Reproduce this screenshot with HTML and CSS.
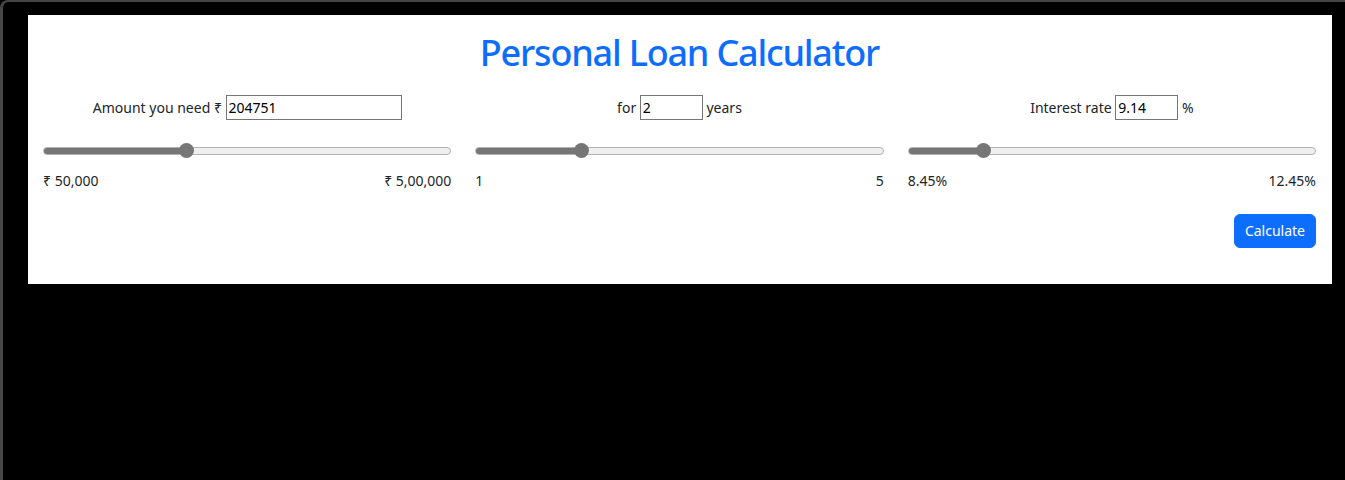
FILE: index.html
```html
<!DOCTYPE html>
<html lang="en">
<head>
<meta charset="utf-8">
<title>Personal Loan Calculator</title>
<link rel="stylesheet" href="styles.css">
</head>
<body>
<div class="window">
  <main class="card">
    <h1 class="title">Personal Loan Calculator</h1>
    <div class="grid">
      <section class="field">
        <div class="field-head"><label for="amount">Amount you need ₹</label> <input id="amount" class="num num-wide" type="text" value="204751"></div>
        <input class="slider" type="range" min="50000" max="500000" value="204751" style="--f:0.3439">
        <div class="range-labels"><span>₹ 50,000</span><span>₹ 5,00,000</span></div>
      </section>
      <section class="field">
        <div class="field-head"><label for="years">for</label> <input id="years" class="num" type="text" value="2"> <span>years</span></div>
        <input class="slider" type="range" min="1" max="5" value="2" style="--f:0.25">
        <div class="range-labels"><span>1</span><span>5</span></div>
      </section>
      <section class="field">
        <div class="field-head"><label for="rate">Interest rate</label> <input id="rate" class="num" type="text" value="9.14"> <span>%</span></div>
        <input class="slider" type="range" min="8.45" max="12.45" step="0.01" value="9.14" style="--f:0.1725">
        <div class="range-labels"><span>8.45%</span><span>12.45%</span></div>
      </section>
    </div>
    <div class="actions"><button class="btn" type="button">Calculate</button></div>
  </main>
</div>
</body>
</html>
```
FILE: styles.css
```css
html, body {
  margin: 0;
  padding: 0;
  background: #000;
}

body {
  font-family: "Noto Sans", "Open Sans", sans-serif;
  font-size: 14px;
  line-height: 1.5;
  color: #212529;
}

.window {
  box-sizing: border-box;
  height: 480px;
  border-left: 3px solid #454545;
  border-top: 2px solid #454545;
  border-top-left-radius: 8px;
  padding: 13px 13px 0 25px;
  background: #000;
}

.card {
  box-sizing: border-box;
  height: 269px;
  background: #fff;
  padding: 14px 16px 0 15px;
}

.title {
  margin: 0;
  font-size: 36px;
  font-weight: 500;
  letter-spacing: -1.2px;
  line-height: 48px;
  color: #0d6efd;
  text-align: center;
}

.grid {
  display: grid;
  grid-template-columns: repeat(3, 1fr);
  column-gap: 24px;
  margin-top: 18px;
}

.field {
  display: flex;
  flex-direction: column;
}

.field-head {
  text-align: center;
  height: 25px;
  line-height: 25px;
}

.num {
  box-sizing: border-box;
  height: 25px;
  width: 63px;
  padding: 1px 2px;
  border: 1px solid #767676;
  border-radius: 0;
  font-family: inherit;
  font-size: 14px;
  color: #000;
  vertical-align: top;
  background: #fff;
}

.num-wide {
  width: 176px;
}

.slider {
  -webkit-appearance: none;
  appearance: none;
  display: block;
  width: 100%;
  height: 15px;
  margin: 23px 0 0;
  padding: 0;
  background: transparent;
}

.slider::-webkit-slider-runnable-track {
  box-sizing: border-box;
  height: 8px;
  border: 1px solid #b2b2b2;
  border-radius: 4px;
  background: linear-gradient(to right, #767676 calc(7.5px + var(--f) * (100% - 15px)), #efefef 0);
}

.slider::-webkit-slider-thumb {
  -webkit-appearance: none;
  appearance: none;
  width: 15px;
  height: 15px;
  margin-top: -4.5px;
  border: 0;
  border-radius: 50%;
  background: #767676;
}

.range-labels {
  display: flex;
  justify-content: space-between;
  margin-top: 12px;
  line-height: 21px;
}

.actions {
  display: flex;
  justify-content: flex-end;
  margin-top: 23px;
}

.btn {
  box-sizing: border-box;
  height: 34px;
  padding: 0 10px;
  border: 1px solid #0d6efd;
  border-radius: 6px;
  background: #0d6efd;
  color: #fff;
  font-family: inherit;
  font-size: 14px;
  line-height: 32px;
  cursor: pointer;
}
```
